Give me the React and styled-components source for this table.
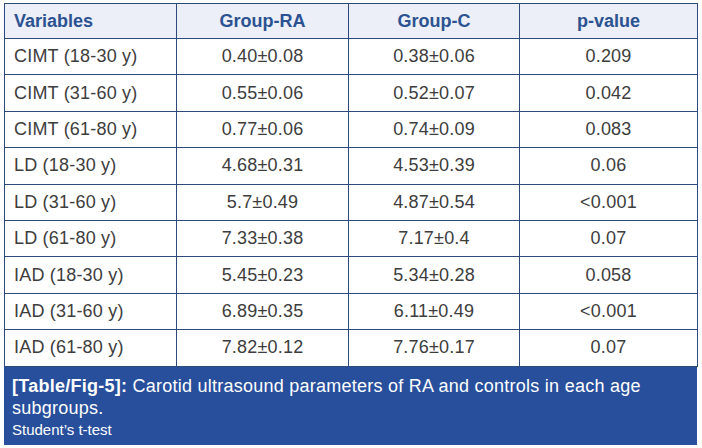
import React from "react";
import styled, { createGlobalStyle } from "styled-components";

const GlobalStyle = createGlobalStyle`
  html, body {
    margin: 0;
    padding: 0;
    background: #ffffff;
  }
`;

const Page = styled.div`
  padding: 3px 5px 0 4px;
  font-family: "Liberation Sans", Arial, sans-serif;
`;

const Table = styled.table`
  width: 693px;
  border-collapse: collapse;
  table-layout: fixed;
`;

const HeadCell = styled.th`
  height: 34px;
  padding: 0 0 0 ${(p) => (p.$left ? "9px" : "0")};
  background: #eceef8;
  border: 1.5px solid #2c4a7c;
  color: #2b5291;
  font-size: 18px;
  font-weight: bold;
  text-align: ${(p) => (p.$left ? "left" : "center")};
  vertical-align: middle;
`;

const Cell = styled.td`
  height: 35.4px;
  padding: 0 0 0 ${(p) => (p.$left ? "9px" : "0")};
  border: 1.5px solid #2c4a7c;
  color: #3d3d3d;
  font-size: 18px;
  letter-spacing: 0.2px;
  text-align: ${(p) => (p.$left ? "left" : "center")};
  vertical-align: middle;
`;

const Caption = styled.div`
  width: 693px;
  box-sizing: border-box;
  background: #284f9c;
  color: #ffffff;
  padding: 8px 8px 6px 8px;
  height: 78px;
`;

const CaptionLine = styled.div`
  font-size: 18px;
  line-height: 22px;
  letter-spacing: 0.25px;
`;

const Note = styled.div`
  font-size: 15px;
  line-height: 20px;
  margin-top: 1px;
`;

const rows = [
  ["CIMT (18-30 y)", "0.40±0.08", "0.38±0.06", "0.209"],
  ["CIMT (31-60 y)", "0.55±0.06", "0.52±0.07", "0.042"],
  ["CIMT (61-80 y)", "0.77±0.06", "0.74±0.09", "0.083"],
  ["LD (18-30 y)", "4.68±0.31", "4.53±0.39", "0.06"],
  ["LD (31-60 y)", "5.7±0.49", "4.87±0.54", "<0.001"],
  ["LD (61-80 y)", "7.33±0.38", "7.17±0.4", "0.07"],
  ["IAD (18-30 y)", "5.45±0.23", "5.34±0.28", "0.058"],
  ["IAD (31-60 y)", "6.89±0.35", "6.11±0.49", "<0.001"],
  ["IAD (61-80 y)", "7.82±0.12", "7.76±0.17", "0.07"],
];

const App = () => {
  return (
    <Page>
      <GlobalStyle />
      <Table>
        <colgroup>
          <col style={{ width: "172px" }} />
          <col style={{ width: "172px" }} />
          <col style={{ width: "171px" }} />
          <col style={{ width: "178px" }} />
        </colgroup>
        <thead>
          <tr>
            <HeadCell $left>Variables</HeadCell>
            <HeadCell>Group-RA</HeadCell>
            <HeadCell>Group-C</HeadCell>
            <HeadCell>p-value</HeadCell>
          </tr>
        </thead>
        <tbody>
          {rows.map((r) => (
            <tr key={r[0]}>
              <Cell $left>{r[0]}</Cell>
              <Cell>{r[1]}</Cell>
              <Cell>{r[2]}</Cell>
              <Cell>{r[3]}</Cell>
            </tr>
          ))}
        </tbody>
      </Table>
      <Caption>
        <CaptionLine>
          <b>[Table/Fig-5]:</b> Carotid ultrasound parameters of RA and controls in each age
          subgroups.
        </CaptionLine>
        <Note>Student’s t-test</Note>
      </Caption>
    </Page>
  );
};

export default App;
